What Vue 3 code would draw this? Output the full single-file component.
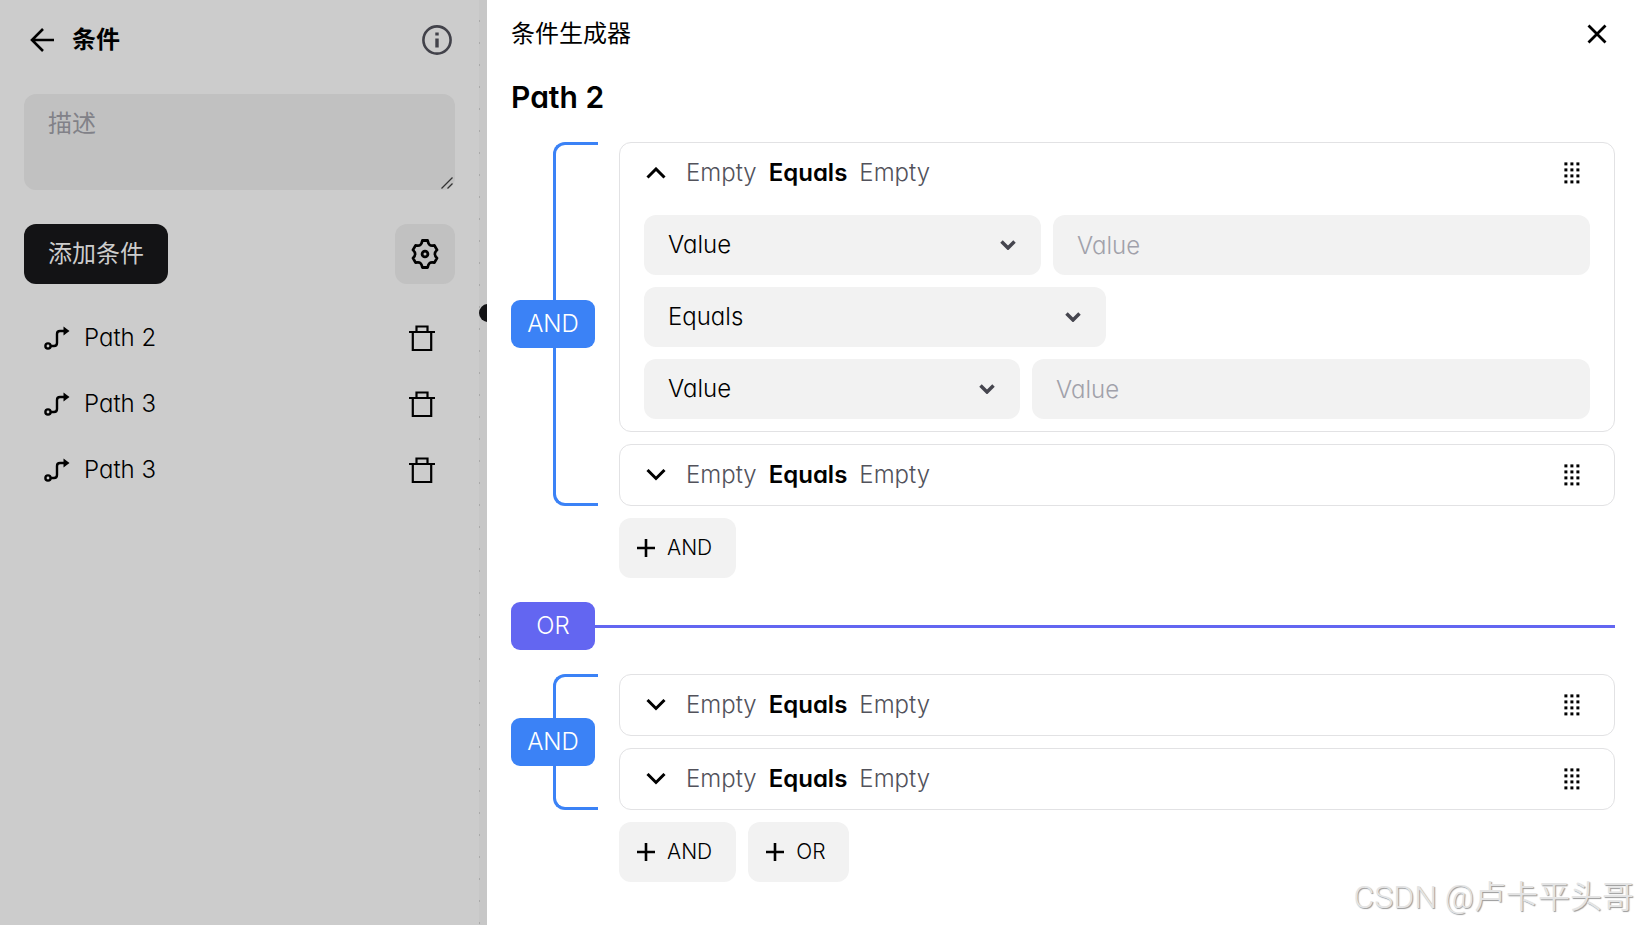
<script setup>
import { reactive, ref } from 'vue'

const description = ref('')
const paths = [
  { id: 1, name: 'Path 2' },
  { id: 2, name: 'Path 3' },
  { id: 3, name: 'Path 3' },
]

const groups = reactive([
  {
    id: 1,
    conditions: [
      { id: 'a', open: true, first: '', second: '' },
      { id: 'b', open: false, first: '', second: '' },
    ],
  },
  {
    id: 2,
    conditions: [
      { id: 'c', open: false, first: '', second: '' },
      { id: 'd', open: false, first: '', second: '' },
    ],
  },
])

const gripDots = [0, 1, 2, 3].flatMap((r) => [0, 1, 2].map((c) => ({ x: 2.4 + c * 6, y: 0.4 + r * 6 })))
</script>

<template>
  <div class="app">
    <aside class="sidebar">
      <header class="side-head">
        <button class="icon-btn" aria-label="返回">
          <svg width="24" height="24" viewBox="0 0 24 24" fill="none" stroke="currentColor" stroke-width="2.6">
            <path d="M24 12H2M13 1 2 12l11 11" />
          </svg>
        </button>
        <h1>条件</h1>
        <button class="icon-btn info" aria-label="信息">
          <svg width="30" height="30" viewBox="0 0 30 30" fill="none" stroke="currentColor">
            <circle cx="15" cy="15" r="13.6" stroke-width="2.6" />
            <path d="M15 13.5v9M15 7.5v3" stroke-width="3.4" />
          </svg>
        </button>
      </header>

      <div class="description">
        <textarea v-model="description" placeholder="描述" aria-label="描述"></textarea>
        <svg width="12" height="12" viewBox="0 0 12 12"><path d="M.5 11.500l11-11M6.500 11.500l5-5" /></svg>
      </div>

      <div class="side-actions">
        <button class="primary">添加条件</button>
        <button class="settings" aria-label="设置">
          <svg width="30" height="30" viewBox="0 0 30 30" fill="none" stroke="currentColor" stroke-width="2.8" stroke-linejoin="round">
            <path d="M12.4 1.500h5.200C18.600 6 20 7.400 24.400 6.400L27 10.900C24 14 24 16 27 19.100L24.400 23.600C20 22.600 18.600 24 17.600 28.500H12.400C11.400 24 10 22.600 5.600 23.600L3 19.100C6 16 6 14 3 10.900L5.600 6.400C10 7.400 11.400 6 12.400 1.500z" />
            <circle cx="15" cy="15" r="2.9" />
          </svg>
        </button>
      </div>

      <ul class="paths">
        <li v-for="path in paths" :key="path.id">
          <svg width="26" height="24" viewBox="0 0 26 24" fill="none" stroke="currentColor" stroke-width="2.4">
            <circle cx="4" cy="20" r="2.6" />
            <path d="M7 20h3q3 0 3-3V8q0-3 3-3h4" />
            <path d="M19.500 0.500v9l6-4.500z" fill="currentColor" stroke="none" />
          </svg>
          <span>{{ path.name }}</span>
          <button class="icon-btn" aria-label="删除">
            <svg width="26" height="26" viewBox="0 0 26 26" fill="none" stroke="currentColor" stroke-width="2.2">
              <path d="M0 7h26M3.800 7v18h18.400V7M7.500 7V1.500h11V7" />
            </svg>
          </button>
        </li>
      </ul>
    </aside>

    <div class="canvas"><span class="node"></span></div>

    <main class="drawer">
      <header class="drawer-head">
        <span>条件生成器</span>
        <button class="icon-btn" aria-label="关闭">
          <svg width="20" height="20" viewBox="0 0 20 20" fill="none" stroke="currentColor" stroke-width="2.8">
            <path d="m1.500 1.500 17 17M18.500 1.500l-17 17" />
          </svg>
        </button>
      </header>
      <h2>Path 2</h2>

      <template v-for="(group, g) in groups" :key="group.id">
        <div v-if="g > 0" class="or-row"><span class="badge or">OR</span></div>

        <section class="group">
          <div class="bracket"><span class="badge">AND</span></div>
          <div class="cards">
            <article v-for="c in group.conditions" :key="c.id" class="card">
              <header class="card-head">
                <button class="icon-btn chevron" :aria-expanded="c.open" aria-label="展开" @click="c.open = !c.open">
                  <svg width="20" height="12" viewBox="0 0 20 12" fill="none" stroke="currentColor" stroke-width="3">
                    <path :d="c.open ? 'm1.500 10.500 8.500-8.500 8.500 8.500' : 'm1.500 1 8.500 8.500 8.500-8.500'" />
                  </svg>
                </button>
                <span>Empty</span><strong>Equals</strong><span>Empty</span>
                <svg class="grip" width="20" height="22" viewBox="0 0 20 22">
                  <rect v-for="(d, i) in gripDots" :key="i" :x="d.x" :y="d.y" width="3" height="3" />
                </svg>
              </header>
              <div v-if="c.open" class="fields">
                <div class="row first">
                  <div class="select">
                    <select aria-label="First type"><option>Value</option></select>
                    <svg width="16" height="10" viewBox="0 0 16 10"><path d="m1.500 1.500 6.500 6.500 6.500-6.500" /></svg>
                  </div>
                  <input v-model="c.first" placeholder="Value" aria-label="First value" />
                </div>
                <div class="row operator">
                  <div class="select">
                    <select aria-label="Operator"><option>Equals</option></select>
                    <svg width="16" height="10" viewBox="0 0 16 10"><path d="m1.500 1.500 6.500 6.500 6.500-6.500" /></svg>
                  </div>
                </div>
                <div class="row second">
                  <div class="select">
                    <select aria-label="Second type"><option>Value</option></select>
                    <svg width="16" height="10" viewBox="0 0 16 10"><path d="m1.500 1.500 6.500 6.500 6.500-6.500" /></svg>
                  </div>
                  <input v-model="c.second" placeholder="Value" aria-label="Second value" />
                </div>
              </div>
            </article>
          </div>
        </section>

        <div class="adders">
          <button>
            <svg width="18" height="18" viewBox="0 0 18 18"><path d="M0 9h18M9 0v18" /></svg>AND
          </button>
          <button v-if="g === groups.length - 1">
            <svg width="18" height="18" viewBox="0 0 18 18"><path d="M0 9h18M9 0v18" /></svg>OR
          </button>
        </div>
      </template>
    </main>
    <div class="watermark">CSDN @卢卡平头哥</div>
  </div>
</template>

<style>
body {
  margin: 0;
}
</style>

<style scoped>
.app {
  position: relative;
  display: flex;
  min-height: 100vh;
  background: #fff;
  color: #000;
  font-family: Inter, "Noto Sans CJK SC", sans-serif;
  font-feature-settings: "cv11";
  font-size: 24px;
  font-weight: 350;
  line-height: 36px;
}
.app * {
  box-sizing: border-box;
}
button,
input,
select,
textarea {
  margin: 0;
  border: 0;
  font: inherit;
  font-feature-settings: inherit;
  color: inherit;
}
svg {
  display: block;
  flex: none;
}
h1,
h2 {
  margin: 0;
}
.icon-btn {
  display: flex;
  padding: 0;
  background: none;
}

.sidebar {
  flex: none;
  width: 479px;
  padding: 22px 24px;
  background: #ccc;
}
.side-head {
  display: flex;
  align-items: center;
  gap: 18px;
  height: 36px;
  padding-left: 6px;
}
.side-head h1 {
  flex: 1;
  font-size: 24px;
  font-weight: 700;
  line-height: 36px;
}
.info {
  margin-right: 3px;
  color: #42424a;
}
.description {
  position: relative;
  margin-top: 36px;
}
.description textarea {
  display: block;
  width: 100%;
  height: 96px;
  padding: 12px 24px;
  border-radius: 12px;
  background: #c1c1c1;
  outline: none;
  resize: none;
  font-weight: 400;
}
.description textarea::placeholder {
  color: #818188;
}
.description svg {
  position: absolute;
  right: 2px;
  bottom: 1px;
  stroke: #333;
  stroke-width: 1.3;
  pointer-events: none;
}
.side-actions {
  display: flex;
  justify-content: space-between;
  margin-top: 34px;
}
.primary {
  height: 60px;
  padding: 0 24px;
  border-radius: 12px;
  background: #131315;
  color: #ccc;
  font-weight: 400;
}
.settings {
  display: grid;
  place-items: center;
  width: 60px;
  height: 60px;
  padding: 0;
  border-radius: 12px;
  background: #c1c1c1;
}
.paths {
  margin: 24px 0 0;
  padding: 0;
  list-style: none;
}
.paths li {
  display: flex;
  align-items: center;
  gap: 14px;
  height: 60px;
  margin-bottom: 6px;
  padding: 0 20px;
}
.paths span {
  flex: 1;
}

.canvas {
  position: relative;
  flex: none;
  width: 8px;
  overflow: hidden;
  background: radial-gradient(circle at 0 21px, #aaa 1px, transparent 1px) 0 0 / 22px 22px #c7c7c7;
}
.node {
  position: absolute;
  top: 304px;
  left: 0;
  width: 18px;
  height: 18px;
  border-radius: 50%;
  background: #131315;
}

.drawer {
  flex: 1;
  min-width: 0;
  padding: 16px 23px 24px 24px;
}
.drawer-head {
  display: flex;
  align-items: center;
  justify-content: space-between;
  height: 36px;
  padding-right: 8px;
  font-weight: 400;
}
h2 {
  margin: 24px 0;
  font-size: 30px;
  font-weight: 600;
  line-height: 42px;
}
.group {
  display: flex;
  gap: 21px;
}
.bracket {
  position: relative;
  flex: none;
  display: flex;
  align-items: center;
  width: 87px;
}
.bracket::before {
  content: "";
  position: absolute;
  inset: 0 0 0 42px;
  border: 3px solid #3b82f6;
  border-right: 0;
  border-radius: 12px 0 0 12px;
}
.badge {
  position: relative;
  flex: none;
  width: 84px;
  height: 48px;
  border-radius: 9px;
  background: #3b82f6;
  color: #fff;
  line-height: 48px;
  text-align: center;
}
.badge.or {
  background: #6366f1;
}
.or-row {
  display: flex;
  align-items: center;
  margin: 24px 0;
}
.or-row::after {
  content: "";
  flex: 1;
  height: 3px;
  background: #6366f1;
}
.cards {
  flex: 1;
  display: grid;
  gap: 12px;
}
.card {
  border: 1px solid #e2e2e4;
  border-radius: 12px;
}
.card-head {
  display: flex;
  align-items: center;
  gap: 12px;
  height: 60px;
  padding: 0 32px 0 26px;
  color: #52525b;
}
.card-head strong {
  color: #000;
  font-weight: 600;
}
.chevron {
  margin-right: 8px;
  color: #000;
}
.grip {
  margin-left: auto;
  fill: #000;
}
.fields {
  display: grid;
  gap: 12px;
  padding: 12px 24px;
}
.row {
  display: grid;
  gap: 12px;
}
.first {
  grid-template-columns: 397fr 537fr;
}
.operator {
  grid-template-columns: 462fr 472fr;
}
.second {
  grid-template-columns: 376fr 558fr;
}
.select {
  position: relative;
}
.select svg {
  position: absolute;
  top: 25px;
  right: 25px;
  fill: none;
  stroke: #46464f;
  stroke-width: 3.5;
  pointer-events: none;
}
select,
input {
  width: 100%;
  min-width: 0;
  height: 60px;
  padding: 0 24px;
  border-radius: 12px;
  background: #f2f2f2;
  outline: none;
  appearance: none;
}
input::placeholder {
  color: #a1a1aa;
}
.adders {
  display: flex;
  gap: 12px;
  margin: 12px 0 0 108px;
}
.adders button {
  display: flex;
  align-items: center;
  gap: 12px;
  height: 60px;
  padding: 0 24px 0 18px;
  border-radius: 12px;
  background: #f2f2f2;
  font-size: 21px;
}
.adders svg {
  stroke: #000;
  stroke-width: 2.6;
}
.watermark {
  position: absolute;
  right: 4px;
  bottom: 4px;
  color: #e4e4e4;
  font-family: Roboto, "Noto Sans CJK SC", sans-serif;
  font-size: 32px;
  line-height: 48px;
  text-shadow: 1px 1px 1px #999;
}
</style>
